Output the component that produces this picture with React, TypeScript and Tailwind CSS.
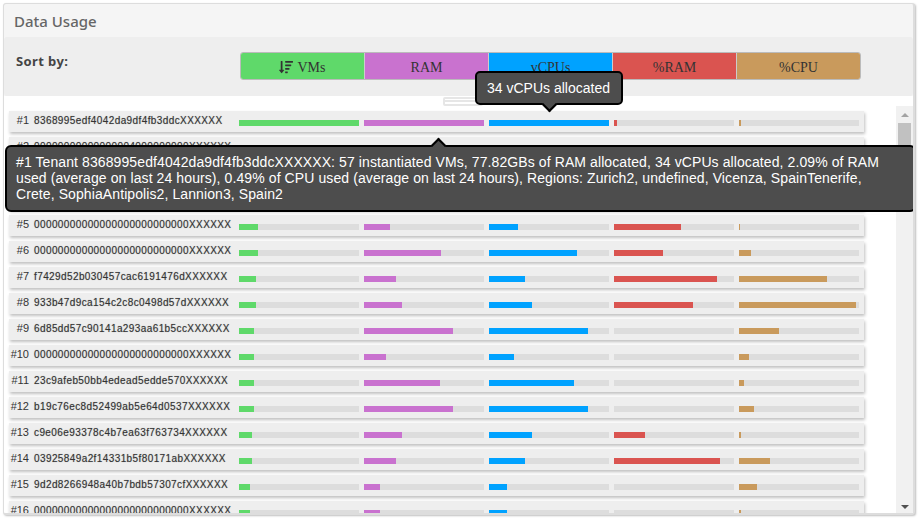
import { FaSortAmountDown } from "react-icons/fa";

const sorters = [
  { label: "VMs", bg: "bg-[#5fd96a]", icon: true },
  { label: "RAM", bg: "bg-[#c972cf]" },
  { label: "vCPUs", bg: "bg-[#00a2ff]" },
  { label: "%RAM", bg: "bg-[#da5450]" },
  { label: "%CPU", bg: "bg-[#c99a5c]" },
];

// bar widths are in px out of the 120px track
const rows: { id: string; bars: number[] }[] = [
  { id: "8368995edf4042da9df4fb3ddcXXXXXX", bars: [120, 120, 120, 3, 2] },
  { id: "00000000000000004000000000XXXXXX", bars: [60, 100, 90, 20, 10] },
  { id: "00000000000000000000000000XXXXXX", bars: [30, 60, 50, 40, 10] },
  { id: "00000000000000000000000000XXXXXX", bars: [20, 30, 30, 50, 5] },
  { id: "00000000000000000000000000XXXXXX", bars: [19, 25.5, 28.5, 66.5, 1] },
  { id: "00000000000000000000000000XXXXXX", bars: [19, 76.5, 88, 48.5, 12] },
  { id: "f7429d52b030457cac6191476dXXXXXX", bars: [17, 31.5, 35.5, 103, 88] },
  { id: "933b47d9ca154c2c8c0498d57dXXXXXX", bars: [17, 38, 42.5, 79, 116.5] },
  { id: "6d85dd57c90141a293aa61b5ccXXXXXX", bars: [15, 89, 99, 0, 40] },
  { id: "00000000000000000000000000XXXXXX", bars: [15, 22, 25, 0, 9.5] },
  { id: "23c9afeb50bb4edead5edde570XXXXXX", bars: [15, 76, 85, 0, 5] },
  { id: "b19c76ec8d52499ab5e64d0537XXXXXX", bars: [15, 89, 99, 0, 14.5] },
  { id: "c9e06e93378c4b7ea63f763734XXXXXX", bars: [13, 38, 42.5, 31, 2] },
  { id: "03925849a2f14331b5f80171abXXXXXX", bars: [13, 31.5, 35.5, 106, 31] },
  { id: "9d2d8266948a40b7bdb57307cfXXXXXX", bars: [11, 16, 18, 0, 18] },
  { id: "00000000000000000000000000XXXXXX", bars: [11, 16, 18, 0, 2] },
];

function Bar({ value, color }: { value: number; color: string }) {
  return (
    <div className="h-[6px] w-[120px] shrink-0 bg-[#ddd]">
      <div className={`h-full ${color}`} style={{ width: `${value}px` }} />
    </div>
  );
}

const barColors = ["bg-[#5fd96a]", "bg-[#c972cf]", "bg-[#00a2ff]", "bg-[#da5450]", "bg-[#c99a5c]"];

export default function App() {
  return (
    <div className="h-[522px] w-[921px] bg-white pl-[3px] pt-[3px] font-['Liberation_Sans',sans-serif]">
      <div className="relative flex h-[512px] w-[912px] flex-col overflow-hidden rounded-[3px] border-b-2 border-l border-r-2 border-t border-[#ddd] bg-[#f5f5f5] shadow-[1px_1px_2px_rgba(0,0,0,0.25)]">
        <div className="flex h-[33px] shrink-0 items-center pl-[10px] pt-[2px] font-['Noto_Sans',sans-serif] text-[15px] font-medium text-[#666]">
          Data Usage
        </div>

        <div className="flex h-[59px] shrink-0 rounded-[3px] bg-[#eee] pl-[12px] pt-[15px]">
          <div className="w-[224px] pt-[1px] font-['Noto_Sans',sans-serif] text-[13px] leading-[16px] font-bold tracking-[0.4px] text-[#444]">
            Sort by:
          </div>
          <div className="flex h-[28px] w-[621px] overflow-hidden rounded-[3px] border border-[#bbb]">
            {sorters.map((s) => (
              <div
                key={s.label}
                className={`flex flex-1 items-center justify-center gap-[4px] border-l border-[#ccc] pt-[2px] font-['Liberation_Serif',serif] text-[14px] text-[#333] first:border-l-0 ${s.bg}`}
              >
                {s.icon ? <FaSortAmountDown className="h-[14px] w-[14px] text-[#333]" /> : null}
                {s.label}
              </div>
            ))}
          </div>
        </div>

        <div className="flex min-h-0 flex-1 bg-white">
          <div className="min-w-0 flex-1 overflow-hidden pl-[5px] pt-[15px]">
            {rows.map((row, i) => (
              <div
                key={i}
                className="mb-[5px] flex h-[21px] w-[855px] items-center bg-[#eee] shadow-[1px_2px_3px_rgba(0,0,0,0.25)]"
              >
                <span className="w-[20px] shrink-0 -translate-y-[1px] text-right text-[11px] text-[#333]">#{i + 1}</span>
                <span className="ml-[5px] w-[205px] shrink-0 -translate-y-[1px] text-[10px] tracking-[0.4px] whitespace-nowrap text-[#333] [text-shadow:0_0_1px_rgba(0,0,0,0.35)]">
                  {row.id}
                </span>
                <div className="flex translate-y-[1px] gap-[5px]">
                  {row.bars.map((b, j) => (
                    <Bar key={j} value={b} color={barColors[j]} />
                  ))}
                </div>
              </div>
            ))}
          </div>

          <div className="mt-[10px] flex w-[17px] shrink-0 flex-col items-center bg-[#f1f1f1] pb-[4px]">
            <div className="mt-[7px] h-0 w-0 border-x-[4px] border-b-[4px] border-x-transparent border-b-[#a3a3a3]" />
            <div className="mt-[6px] h-[80px] w-[13px] bg-[#c1c1c1]" />
            <div className="mt-auto h-0 w-0 border-x-[4px] border-t-[4px] border-x-transparent border-t-[#505050]" />
          </div>
        </div>

        {/* drag handle behind the small tooltip */}
        <div className="absolute top-[93px] left-[439px] h-[9px] w-[40px] rounded-[2px] border-2 border-[#e6e6e6] bg-white">
          <div className="mt-[1px] h-[2px] bg-[#e6e6e6]" />
        </div>

        {/* vCPU tooltip */}
        <div className="absolute top-[67px] left-[471px] rounded-[5px] border-2 border-black bg-[#4d4d4d] py-[7px] pl-[10px] pr-[11px] text-[14px] leading-[16px] whitespace-nowrap text-white">
          34 vCPUs allocated
          <div className="absolute -bottom-[7px] left-[67px] h-[11px] w-[11px] rotate-45 border-r-2 border-b-2 border-black bg-[#4d4d4d]" />
        </div>

        {/* tenant tooltip */}
        <div className="absolute top-[141px] left-[1px] h-[67px] w-[911px] rounded-[6px] border-2 border-black bg-[#4d4d4d] pl-[9px] pr-[18px] pt-[7px] text-[14px] leading-[16px] tracking-[0.095px] text-white">
          <div className="absolute -top-[7px] left-[426px] h-[11px] w-[11px] rotate-45 border-t-2 border-l-2 border-black bg-[#4d4d4d]" />
          #1 Tenant 8368995edf4042da9df4fb3ddcXXXXXX: 57 instantiated VMs, 77.82GBs of RAM allocated, 34 vCPUs allocated, 2.09% of RAM used (average on last 24 hours), 0.49% of CPU used (average on last 24 hours), Regions: Zurich2, undefined, Vicenza, SpainTenerife, Crete, SophiaAntipolis2, Lannion3, Spain2
        </div>
      </div>
    </div>
  );
}
